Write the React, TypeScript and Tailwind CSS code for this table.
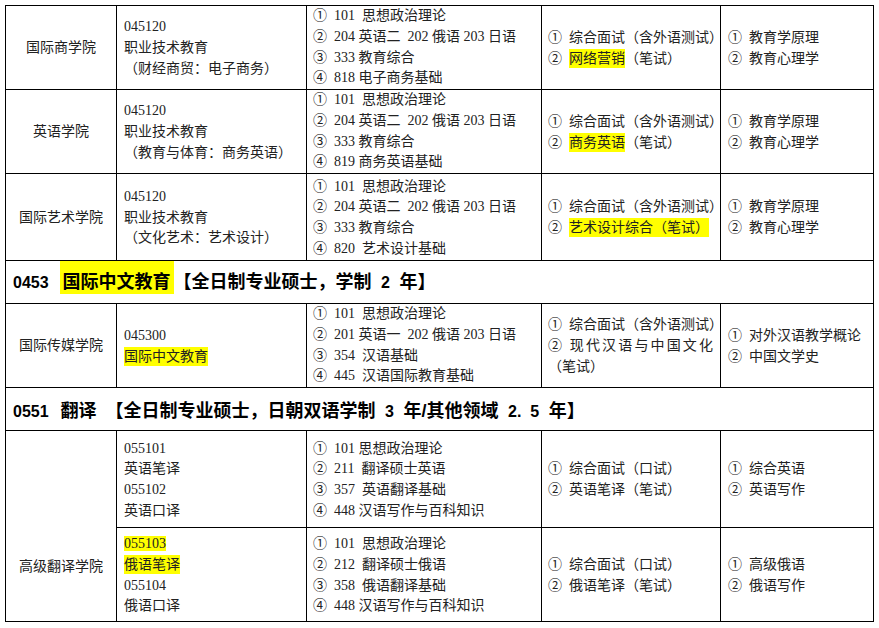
import React from 'react';

const circ = ['①', '②', '③', '④'];

function Hl({ children, tall }: { children: React.ReactNode; tall?: boolean }) {
  return <span className={tall ? 'bg-[#ffff00] py-[2px]' : 'bg-[#ffff00]'}>{children}</span>;
}

function Item({ i, children }: { i: number; children: React.ReactNode }) {
  return (
    <div className="whitespace-pre">
      <span className="inline-block w-[21px]">{circ[i]}</span>
      {children}
    </div>
  );
}

interface Row {
  college?: string;
  height: string;
  tight?: boolean;
  major: React.ReactNode[];
  exams: string[];
  retest: React.ReactNode;
  extra: string[];
}

// pt-[2px] nudges the centred text down a pixel
const td = 'border border-black p-0 pt-[2px] align-middle';
const tdTight = 'border border-black p-0 align-middle';

function list(items: React.ReactNode[]) {
  return items.map((x, i) => (
    <Item key={i} i={i}>
      {x}
    </Item>
  ));
}

const eduRows: Row[] = [
  {
    college: '国际商学院',
    height: 'h-[84px]',
    tight: true,
    major: ['045120', '职业技术教育', '（财经商贸：电子商务）'],
    exams: ['101  思想政治理论', '204 英语二  202 俄语 203 日语', '333 教育综合', '818 电子商务基础'],
    retest: list(['综合面试（含外语测试）', <><Hl tall>网络营销</Hl>（笔试）</>]),
    extra: ['教育学原理', '教育心理学'],
  },
  {
    college: '英语学院',
    height: 'h-[84px]',
    tight: true,
    major: ['045120', '职业技术教育', '（教育与体育：商务英语）'],
    exams: ['101  思想政治理论', '204 英语二  202 俄语 203 日语', '333 教育综合', '819 商务英语基础'],
    retest: list(['综合面试（含外语测试）', <><Hl tall>商务英语</Hl>（笔试）</>]),
    extra: ['教育学原理', '教育心理学'],
  },
  {
    college: '国际艺术学院',
    height: 'h-[87px]',
    major: ['045120', '职业技术教育', '（文化艺术：艺术设计）'],
    exams: ['101  思想政治理论', '204 英语二  202 俄语 203 日语', '333 教育综合', '820  艺术设计基础'],
    retest: list(['综合面试（含外语测试）', <Hl tall>艺术设计综合（笔试）</Hl>]),
    extra: ['教育学原理', '教育心理学'],
  },
];

const chineseRow: Row = {
  college: '国际传媒学院',
  height: 'h-[84px]',
  tight: true,
  major: ['045300', <Hl tall>国际中文教育</Hl>],
  exams: ['101  思想政治理论', '201 英语一  202 俄语 203 日语', '354  汉语基础', '445  汉语国际教育基础'],
  retest: (
    <>
      <Item i={0}>综合面试（含外语测试）</Item>
      <div className="text-justify [text-align-last:justify]">② 现代汉语与中国文化</div>
      <div>（笔试）</div>
    </>
  ),
  extra: ['对外汉语教学概论', '中国文学史'],
};

const transRows: Row[] = [
  {
    height: 'h-[97px]',
    major: ['055101', '英语笔译', '055102', '英语口译'],
    exams: ['101 思想政治理论', '211  翻译硕士英语', '357  英语翻译基础', '448 汉语写作与百科知识'],
    retest: list(['综合面试（口试）', '英语笔译（笔试）']),
    extra: ['综合英语', '英语写作'],
  },
  {
    height: 'h-[94px]',
    major: [<Hl>055103</Hl>, <Hl tall>俄语笔译</Hl>, '055104', '俄语口译'],
    exams: ['101  思想政治理论', '212  翻译硕士俄语', '358  俄语翻译基础', '448 汉语写作与百科知识'],
    retest: list(['综合面试（口试）', '俄语笔译（笔试）']),
    extra: ['高级俄语', '俄语写作'],
  },
];

function Cells({ row }: { row: Row }) {
  return (
    <>
      <td className={`${td} pl-[7px]`}>
        {row.major.map((m, i) => (
          <div key={i} className="whitespace-pre">
            {m}
          </div>
        ))}
      </td>
      <td className={`${row.tight ? tdTight : td} pl-[6px]`}>{list(row.exams)}</td>
      <td className={`${td} pl-[6px] pr-[7px]`}>{row.retest}</td>
      <td className={`${td} pl-[7px]`}>{list(row.extra)}</td>
    </>
  );
}

function BodyRow({ row }: { row: Row }) {
  return (
    <tr className={row.height}>
      <td className={`${td} text-center`}>{row.college}</td>
      <Cells row={row} />
    </tr>
  );
}

// section headers use a wide (heiti-like) space
const head =
  "flex items-baseline whitespace-pre pl-[7px] font-['Liberation_Sans','Noto_Sans_CJK_SC',sans-serif] font-bold text-[18px] leading-[20px] text-black [word-spacing:4.5px]";

export default function App() {
  return (
    <div className="min-h-screen bg-white pl-[5px] pt-[5px]">
      <table className="w-[868px] table-fixed border-collapse font-['Liberation_Serif','Noto_Sans_CJK_SC',serif] text-[14px] leading-[20.7px] text-[#222]">
        <colgroup>
          <col className="w-[111px]" />
          <col className="w-[190px]" />
          <col className="w-[235px]" />
          <col className="w-[179px]" />
          <col className="w-[153px]" />
        </colgroup>
        <tbody>
          {eduRows.map((r, i) => (
            <BodyRow key={i} row={r} />
          ))}
          <tr className="h-[43px]">
            <td colSpan={5} className="border border-black p-0 align-top">
              <div className={head}>
                <span className="text-[16px]">0453</span>
                <span className="ml-[11px] bg-[#ffff00] px-[3px] pt-[11px] pb-[2px]">国际中文教育</span>
                <span>
                  【全日制专业硕士，学制 <span className="text-[16px]">2</span> 年】
                </span>
              </div>
            </td>
          </tr>
          <BodyRow row={chineseRow} />
          <tr className="h-[43px]">
            <td colSpan={5} className="border border-black p-0 align-top">
              <div className={`${head} pt-[13px]`}>
                <span className="text-[16px]">0551</span>
                <span className="ml-[12px]">翻译</span>
                <span className="ml-[9px]">
                  【全日制专业硕士，日朝双语学制 <span className="text-[16px]">3</span> 年/其他领域{' '}
                  <span className="text-[16px]">2. 5</span> 年】
                </span>
              </div>
            </td>
          </tr>
          <tr className={transRows[0].height}>
            <td rowSpan={2} className={`${tdTight} pt-[82px] text-center`}>
              高级翻译学院
            </td>
            <Cells row={transRows[0]} />
          </tr>
          <tr className={transRows[1].height}>
            <Cells row={transRows[1]} />
          </tr>
        </tbody>
      </table>
    </div>
  );
}
